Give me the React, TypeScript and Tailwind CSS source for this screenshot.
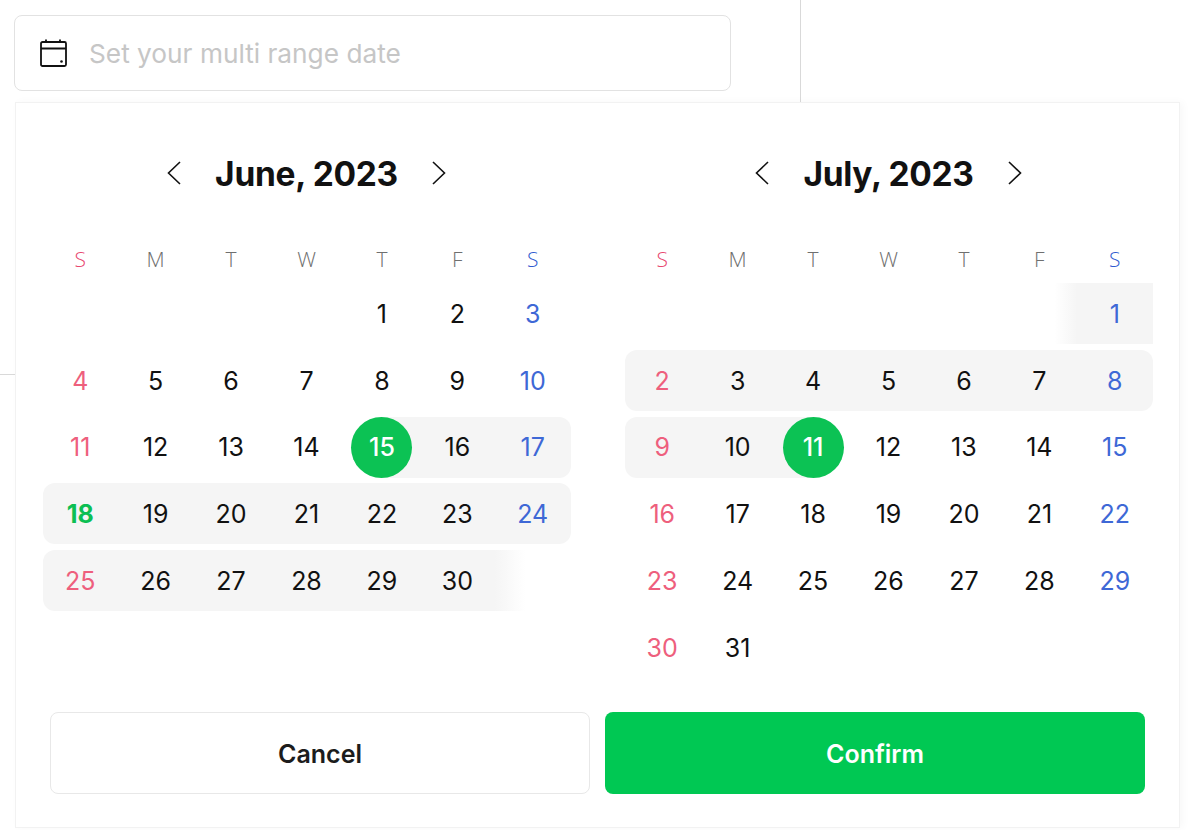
type Band = "full" | "half-left" | "half-right" | "fade-left" | "fade-right" | "none";

type Day = { n?: number; band?: Band; selected?: boolean; start?: boolean; open?: boolean };

const FONT = "font-['Inter','Liberation_Sans',sans-serif]";

const weekdays = ["S", "M", "T", "W", "T", "F", "S"];

// Band classes written out so Tailwind can scan them
const bandClass: Record<Band, string> = {
  full: "bg-[#f5f5f5]",
  "half-left": "bg-[linear-gradient(to_right,#f5f5f5_50%,transparent_50%)]",
  "half-right": "bg-[linear-gradient(to_right,transparent_50%,#f5f5f5_50%)]",
  "fade-left": "bg-[linear-gradient(to_right,transparent_70%,#f5f5f5_100%)]",
  "fade-right": "bg-[linear-gradient(to_right,#f5f5f5,transparent_40%)]",
  none: "",
};

const june: Day[][] = [
  [{}, {}, {}, {}, { n: 1 }, { n: 2 }, { n: 3 }],
  [{ n: 4 }, { n: 5 }, { n: 6 }, { n: 7 }, { n: 8 }, { n: 9 }, { n: 10 }],
  [
    { n: 11 },
    { n: 12 },
    { n: 13 },
    { n: 14 },
    { n: 15, selected: true, band: "half-right" },
    { n: 16, band: "full" },
    { n: 17, band: "full" },
  ],
  [
    { n: 18, band: "full", start: true },
    { n: 19, band: "full" },
    { n: 20, band: "full" },
    { n: 21, band: "full" },
    { n: 22, band: "full" },
    { n: 23, band: "full" },
    { n: 24, band: "full" },
  ],
  [
    { n: 25, band: "full" },
    { n: 26, band: "full" },
    { n: 27, band: "full" },
    { n: 28, band: "full" },
    { n: 29, band: "full" },
    { n: 30, band: "full" },
    { band: "fade-right" },
  ],
  [{}, {}, {}, {}, {}, {}, {}],
];

const july: Day[][] = [
  [{}, {}, {}, {}, {}, { band: "fade-left" }, { n: 1, band: "full", open: true }],
  [
    { n: 2, band: "full" },
    { n: 3, band: "full" },
    { n: 4, band: "full" },
    { n: 5, band: "full" },
    { n: 6, band: "full" },
    { n: 7, band: "full" },
    { n: 8, band: "full" },
  ],
  [
    { n: 9, band: "full" },
    { n: 10, band: "full" },
    { n: 11, selected: true, band: "half-left" },
    { n: 12 },
    { n: 13 },
    { n: 14 },
    { n: 15 },
  ],
  [{ n: 16 }, { n: 17 }, { n: 18 }, { n: 19 }, { n: 20 }, { n: 21 }, { n: 22 }],
  [{ n: 23 }, { n: 24 }, { n: 25 }, { n: 26 }, { n: 27 }, { n: 28 }, { n: 29 }],
  [{ n: 30 }, { n: 31 }, {}, {}, {}, {}, {}],
];

function CalendarIcon() {
  return (
    <svg width="28" height="28" viewBox="0 0 28 28" fill="none" stroke="#111" strokeWidth="1.8">
      <rect x="1" y="3" width="25" height="24" rx="1.5" />
      <path d="M1 9.5h25M6 0.5v3M20 0.5v3" />
      <circle cx="21.5" cy="22.5" r="1.3" fill="#111" stroke="none" />
    </svg>
  );
}

function Chevron({ dir }: { dir: "left" | "right" }) {
  return (
    <svg width="16" height="24" viewBox="0 0 16 24" fill="none" stroke="#111" strokeWidth="1.6">
      <path d={dir === "left" ? "M14 1 2.5 12 14 23" : "M2 1 13.5 12 2 23"} />
    </svg>
  );
}

function DayCell({ day, col }: { day: Day; col: number }) {
  const band = day.band ?? "none";
  const tone = day.start
    ? "text-[#0cbf53] font-bold"
    : col === 0
      ? "text-[#ee5f7d]"
      : col === 6
        ? "text-[#3e68d6]"
        : "text-[#111]";
  const roundRight = col === 6 && band === "full" && !day.open;

  return (
    <div
      className={`flex items-center justify-center ${bandClass[band]} ${col === 0 ? "rounded-l-xl" : ""} ${
        roundRight ? "rounded-r-xl" : ""
      }`}
    >
      {day.selected ? (
        <span className="flex size-[61px] items-center justify-center rounded-full bg-[#0cc254] pt-[2px] font-medium text-white">
          {day.n}
        </span>
      ) : (
        <span className={`pt-[2px] ${tone}`}>{day.n}</span>
      )}
    </div>
  );
}

function Month({ title, weeks }: { title: string; weeks: Day[][] }) {
  return (
    <div className="w-[528px]">
      <div className="flex h-10 items-center justify-center gap-[33px]">
        <Chevron dir="left" />
        <span className="pt-[2px] text-[33.5px] font-bold tracking-[-0.3px] text-[#111]">{title}</span>
        <Chevron dir="right" />
      </div>

      <div className="mt-[51px] grid grid-cols-7 font-['Open_Sans',sans-serif] text-[21px] leading-[30px]">
        {weekdays.map((w, i) => (
          <span
            key={i}
            className={`text-center font-light ${i === 0 ? "text-[#e8486f]" : i === 6 ? "text-[#2f5bd0]" : "text-[#6f6f6f]"}`}
          >
            {w}
          </span>
        ))}
      </div>

      <div className="mt-[9px] flex flex-col gap-[5.8px] text-[25px]">
        {weeks.map((week, r) => (
          <div key={r} className="grid h-[61px] grid-cols-7">
            {week.map((day, c) => (
              <DayCell key={c} day={day} col={c} />
            ))}
          </div>
        ))}
      </div>
    </div>
  );
}

export default function App() {
  return (
    <div className={`relative h-[830px] w-[1200px] overflow-hidden bg-white ${FONT}`}>
      {/* page lines sitting behind the popup */}
      <div className="absolute left-[800px] top-0 h-[102px] w-px bg-[#d9d9d9]" />
      <div className="absolute left-0 top-[374px] h-px w-[15px] bg-[#d9d9d9]" />

      <div className="relative pl-[14px] pt-[15px]">
        <div className="flex h-[76px] w-[717px] items-center gap-[21px] rounded-lg border-[1.5px] border-[#e2e2e2] bg-white pl-[25px]">
          <CalendarIcon />
          <span className="pt-[2px] text-[26.25px] text-[#c6c6c6]">Set your multi range date</span>
        </div>
      </div>

      <div className="relative ml-[15px] mt-[11px] h-[726px] w-[1165px] border border-[#f2f2f2] bg-white pl-[26.5px] pt-[50px] shadow-[3px_0_8px_rgba(0,0,0,0.03)]">
        <div className="flex gap-[54px]">
          <Month title="June, 2023" weeks={june} />
          <Month title="July, 2023" weeks={july} />
        </div>

        <div className="ml-[7.5px] mt-[34px] flex gap-[15px] text-[25px] font-semibold">
          <button className="h-[82px] w-[540px] rounded-lg border-[1.5px] border-[#e8e8e8] bg-white pt-[3px] text-[#1c1c1c]">
            Cancel
          </button>
          <button className="h-[82px] w-[540px] rounded-lg bg-[#00c853] pt-[3px] text-white">Confirm</button>
        </div>
      </div>
    </div>
  );
}
